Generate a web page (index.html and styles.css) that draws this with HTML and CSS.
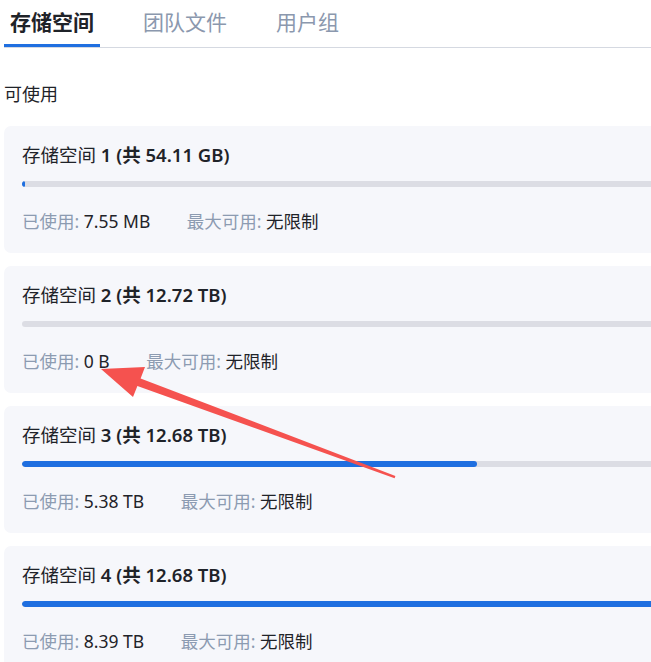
FILE: index.html
```html
<!DOCTYPE html>
<html lang="zh-CN">
<head>
<meta charset="utf-8">
<title>存储空间</title>
<link rel="stylesheet" href="styles.css">
</head>
<body>
<div class="page">
  <nav class="tabs">
    <div class="tab active">存储空间</div>
    <div class="tab">团队文件</div>
    <div class="tab">用户组</div>
  </nav>
  <div class="section-label">可使用</div>
  <div class="cards">
    <div class="card">
      <div class="title"><span class="name">存储空间</span> <b>1 (共 54.11 GB)</b></div>
      <div class="bar"><div class="fill" style="width:0.2%"></div></div>
      <div class="meta"><span class="item"><span class="k">已使用:</span> 7.55 MB</span><span class="item"><span class="k">最大可用:</span> 无限制</span></div>
    </div>
    <div class="card">
      <div class="title"><span class="name">存储空间</span> <b>2 (共 12.72 TB)</b></div>
      <div class="bar"></div>
      <div class="meta"><span class="item"><span class="k">已使用:</span> 0 B</span><span class="item"><span class="k">最大可用:</span> 无限制</span></div>
    </div>
    <div class="card">
      <div class="title"><span class="name">存储空间</span> <b>3 (共 12.68 TB)</b></div>
      <div class="bar"><div class="fill" style="width:42.43%"></div></div>
      <div class="meta"><span class="item"><span class="k">已使用:</span> 5.38 TB</span><span class="item"><span class="k">最大可用:</span> 无限制</span></div>
    </div>
    <div class="card">
      <div class="title"><span class="name">存储空间</span> <b>4 (共 12.68 TB)</b></div>
      <div class="bar"><div class="fill" style="width:66.17%"></div></div>
      <div class="meta"><span class="item"><span class="k">已使用:</span> 8.39 TB</span><span class="item"><span class="k">最大可用:</span> 无限制</span></div>
    </div>
  </div>
</div>
<svg class="arrow" width="651" height="662" viewBox="0 0 651 662" aria-hidden="true">
  <polygon points="101,369 145,367 140.6,378.4 395.4,476 394.6,478.2 137.4,386 133,397" fill="#f5524f"/>
</svg>
</body>
</html>
```

FILE: styles.css
```css
html, body {
  margin: 0;
  padding: 0;
  overflow: hidden;
  background: #ffffff;
}
body {
  position: relative;
  width: 651px;
  height: 662px;
  font-family: "Noto Sans", "Noto Sans CJK SC", sans-serif;
  color: #1f2329;
}
.page {
  width: 1108px;
  padding-left: 4px;
}
.tabs {
  display: flex;
  gap: 37px;
  height: 48px;
  border-bottom: 1px solid #d5d9e1;
  box-sizing: border-box;
}
.tab {
  font-size: 21px;
  line-height: 30px;
  padding: 7px 6px 0;
  color: #8b98ae;
  box-sizing: border-box;
  height: 47px;
  border-bottom: 3px solid transparent;
}
.tab.active {
  color: #1f2329;
  font-weight: 700;
  border-bottom-color: #1f6fe0;
}
.section-label {
  font-size: 18px;
  line-height: 24px;
  margin-top: 34px;
  margin-bottom: 20px;
}
.cards {
  display: flex;
  flex-direction: column;
  gap: 13px;
}
.card {
  background: #f6f7fb;
  border-radius: 7px;
  padding: 16px 18px 19px;
}
.title {
  font-size: 18.5px;
  line-height: 25px;
}
.title b {
  font-weight: 600;
}
.bar {
  margin-top: 14px;
  height: 6px;
  border-radius: 3px;
  background: #dcdde4;
  overflow: hidden;
}
.fill {
  height: 100%;
  min-width: 3px;
  background: #1f6fe0;
  border-radius: 3px;
}
.meta {
  margin-top: 22px;
  font-size: 17.5px;
  line-height: 25px;
  display: flex;
}
.item {
  margin-right: 36.5px;
}
.k {
  color: #8c9bb1;
}
.arrow {
  position: absolute;
  left: 0;
  top: 0;
  pointer-events: none;
}
```
